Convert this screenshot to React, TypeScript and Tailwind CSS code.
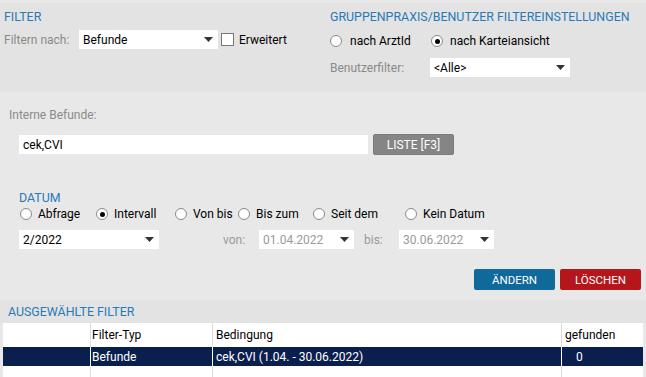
import React from 'react'

const blau = 'text-[#2a7ab8] text-[12.4px]'

function Pfeil() {
  return (
    <svg width="9" height="5" viewBox="0 0 9 5" className="shrink-0">
      <path d="M0 0 H9 L4.5 5 Z" fill="#333" />
    </svg>
  )
}

function Auswahl({ wert, breite, grau }: { wert: string; breite: string; grau?: boolean }) {
  return (
    <div className={`flex h-[19px] items-center justify-between bg-white pl-[4px] pr-[5px] ${breite}`}>
      <span className={grau ? 'text-[#9a9a9a]' : 'text-black'}>{wert}</span>
      <Pfeil />
    </div>
  )
}

function Radio({ label, an, abstand = 'ml-[6px]' }: { label: string; an?: boolean; abstand?: string }) {
  return (
    <div className="flex items-center">
      <span className="flex size-[12px] items-center justify-center rounded-full border border-[#8a8a8a] bg-white">
        {an && <span className="size-[5px] rounded-full bg-black" />}
      </span>
      <span className={`${abstand} text-black`}>{label}</span>
    </div>
  )
}

export default function App() {
  return (
    <div
      className="h-[377px] w-[646px] overflow-hidden bg-[#e8e8e8] text-[12px] leading-[14px]"
      style={{ fontFamily: 'Roboto, "Liberation Sans", sans-serif' }}
    >
      <div className="h-[3px]" />

      {/* Filter oben */}
      <div className="flex h-[89px] bg-[#e3e3e3]">
        <div className="w-[326px] pl-[4px]">
          <div className={`mt-[7px] ${blau}`}>FILTER</div>
          <div className="mt-[6px] flex items-center">
            <span className="w-[75px] text-[#8a8a8a]">Filtern nach:</span>
            <Auswahl wert="Befunde" breite="w-[139px]" />
            <span className="ml-[3px] size-[13px] border border-[#777] bg-white" />
            <span className="ml-[5px] text-black">Erweitert</span>
          </div>
        </div>
        <div className="pl-[4px]">
          <div className={`mt-[7px] ${blau}`}>GRUPPENPRAXIS/BENUTZER FILTEREINSTELLUNGEN</div>
          <div className="mt-[10px] flex items-center">
            <div className="w-[101px]"><Radio label="nach ArztId" abstand="ml-[8px]" /></div>
            <Radio label="nach Karteiansicht" an abstand="ml-[7px]" />
          </div>
          <div className="mt-[10px] flex items-center">
            <span className="w-[100px] text-[#8a8a8a]">Benutzerfilter:</span>
            <Auswahl wert="<Alle>" breite="w-[140px]" />
          </div>
        </div>
      </div>

      {/* Mittelteil */}
      <div className="h-[208px]">
        <div className="ml-[9px] pt-[16px] text-[#8a8a8a]">Interne Befunde:</div>
        <div className="ml-[19px] mt-[12px] flex h-[21px] items-center">
          <div className="flex h-[19px] w-[349px] items-center bg-white pl-[4px] text-black">cek,CVI</div>
          <button className="ml-[5px] h-[21px] w-[81px] rounded-[2px] border border-[#7a7a7a] bg-[#858585] text-[12px] text-white">
            LISTE [F3]
          </button>
        </div>

        <div className={`ml-[19px] mt-[36px] ${blau}`}>DATUM</div>
        <div className="ml-[20px] mt-[2px] flex items-center">
          <div className="w-[76px]"><Radio label="Abfrage" /></div>
          <div className="w-[79px]"><Radio label="Intervall" an /></div>
          <div className="w-[63px]"><Radio label="Von bis" /></div>
          <div className="w-[75px]"><Radio label="Bis zum" /></div>
          <div className="w-[92px]"><Radio label="Seit dem" /></div>
          <Radio label="Kein Datum" />
        </div>

        <div className="ml-[19px] mt-[9px] flex items-center">
          <Auswahl wert="2/2022" breite="w-[140px]" />
          <span className="ml-[64px] w-[36px] text-[#9a9a9a]">von:</span>
          <Auswahl wert="01.04.2022" breite="w-[95px]" grau />
          <span className="ml-[10px] w-[35px] text-[#9a9a9a]">bis:</span>
          <Auswahl wert="30.06.2022" breite="w-[95px]" grau />
        </div>

        <div className="mt-[20px] flex justify-end gap-[5px] pr-[5px]">
          <button className="h-[21px] w-[81px] rounded-[2px] bg-[#10699b] text-[11.5px] text-white">ÄNDERN</button>
          <button className="h-[21px] w-[81px] rounded-[2px] bg-[#b5161c] text-[11.5px] text-white">LÖSCHEN</button>
        </div>
      </div>

      {/* Ausgewählte Filter */}
      <div className={`flex h-[23px] items-center bg-[#e3e3e3] pl-[8px] ${blau}`}>AUSGEWÄHLTE FILTER</div>

      <div className="mx-[3px] bg-white text-black">
        <div className="grid h-[24px] grid-cols-[88px_122px_349px_78px] items-center">
          <div className="h-full border-r border-[#dcdcdc]" />
          <div className="flex h-full items-center border-r border-[#dcdcdc] pl-[1px]">Filter-Typ</div>
          <div className="flex h-full items-center border-r border-[#dcdcdc] pl-[3px]">Bedingung</div>
          <div className="pl-[3px]">gefunden</div>
        </div>
        <div className="grid h-[19px] grid-cols-[88px_122px_349px_78px] bg-[#0b1f4f] text-white">
          <div className="border-r border-white" />
          <div className="flex items-center border-r border-white pl-[1px]">Befunde</div>
          <div className="flex items-center border-r border-white pl-[3px]">cek,CVI (1.04. - 30.06.2022)</div>
          <div className="flex items-center pl-[14px]">0</div>
        </div>
        <div className="mt-[1px] grid h-[12px] grid-cols-[88px_122px_349px_78px]">
          <div className="border-r border-[#dcdcdc]" />
          <div className="border-r border-[#dcdcdc]" />
          <div className="border-r border-[#dcdcdc]" />
          <div />
        </div>
      </div>
    </div>
  )
}
